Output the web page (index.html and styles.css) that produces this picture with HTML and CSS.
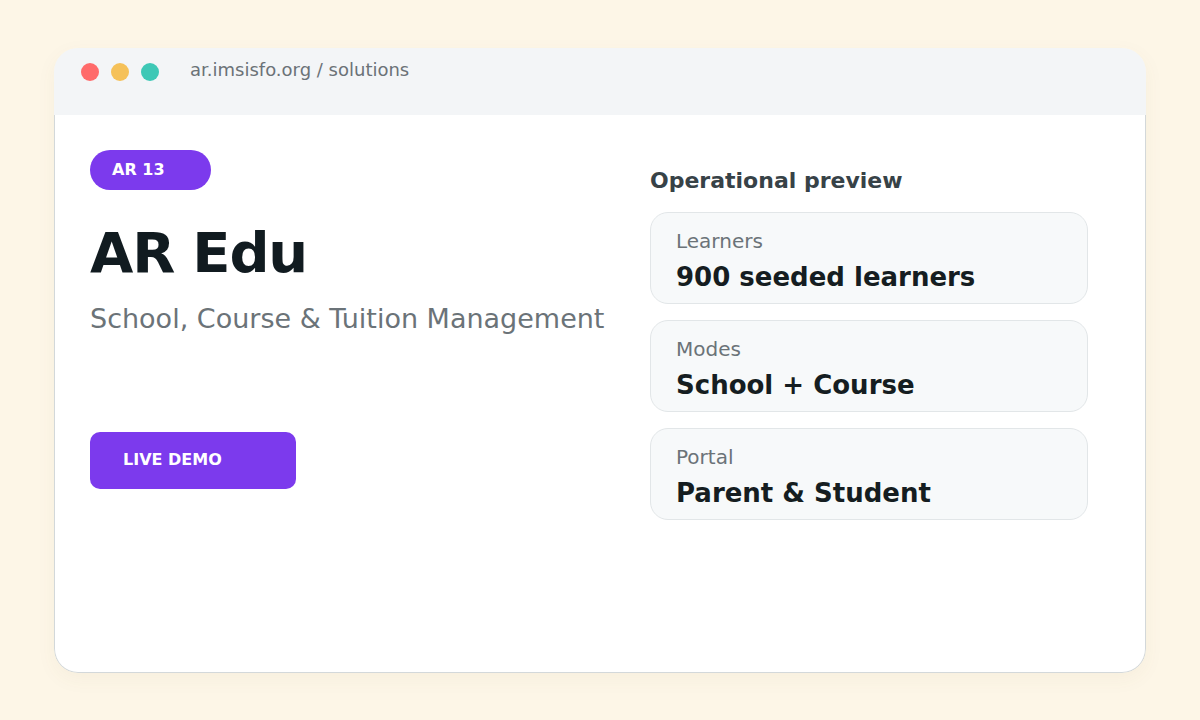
FILE: index.html
```html
<!DOCTYPE html>
<html lang="en">
<head>
<meta charset="utf-8">
<title>AR Edu</title>
<link rel="stylesheet" href="styles.css">
</head>
<body>
<div class="window">
  <div class="titlebar">
    <div class="dots">
      <span class="dot red"></span>
      <span class="dot yellow"></span>
      <span class="dot teal"></span>
    </div>
    <div class="url">ar.imsisfo.org / solutions</div>
  </div>
  <div class="content">
    <div class="left">
      <div class="badge">AR 13</div>
      <h1 class="title">AR Edu</h1>
      <p class="subtitle">School, Course &amp; Tuition Management</p>
      <a class="cta">LIVE DEMO</a>
    </div>
    <div class="right">
      <h2 class="heading">Operational preview</h2>
      <div class="cards">
        <div class="card">
          <div class="label">Learners</div>
          <div class="value">900 seeded learners</div>
        </div>
        <div class="card">
          <div class="label">Modes</div>
          <div class="value">School + Course</div>
        </div>
        <div class="card">
          <div class="label">Portal</div>
          <div class="value">Parent &amp; Student</div>
        </div>
      </div>
    </div>
  </div>
</div>
</body>
</html>
```

FILE: styles.css
```css
* { box-sizing: border-box; }
html, body { margin: 0; padding: 0; }
body {
  background: #fdf6e7;
  font-family: "DejaVu Sans", Verdana, sans-serif;
  width: 1200px;
  height: 720px;
  padding: 48px 54px;
}
.window {
  width: 1092px;
  height: 625px;
  border-radius: 24px;
  overflow: hidden;
  display: flex;
  flex-direction: column;
  box-shadow: 0 6px 20px rgba(120, 100, 60, 0.05);
}
.titlebar {
  height: 67px;
  background: #f3f5f7;
  display: flex;
  align-items: flex-start;
  padding: 11px 27px 0;
}
.dots {
  display: flex;
  gap: 12px;
  margin-top: 4px;
}
.dot {
  width: 18px;
  height: 18px;
  border-radius: 50%;
  display: block;
}
.red { background: #ff6b6b; }
.yellow { background: #f5c159; }
.teal { background: #3ec8b6; }
.url {
  margin-left: 31px;
  font-size: 18px;
  line-height: 21px;
  color: #6b7277;
}
.content {
  flex: 1;
  background: #ffffff;
  border: 1px solid #d3d8da;
  border-top: none;
  border-radius: 0 0 24px 24px;
  display: flex;
  padding: 35px 57px 36px 35px;
}
.left {
  flex: 1;
  display: flex;
  flex-direction: column;
  align-items: flex-start;
}
.badge {
  width: 121px;
  height: 40px;
  line-height: 40px;
  padding-left: 22px;
  border-radius: 20px;
  background: #7c3aed;
  color: #ffffff;
  font-weight: bold;
  font-size: 16px;
}
.title {
  margin: 32px 0 0;
  font-size: 56px;
  line-height: 61.6px;
  letter-spacing: -1.2px;
  font-weight: bold;
  color: #111b20;
}
.subtitle {
  margin: 16px 0 0;
  font-size: 27px;
  line-height: 38px;
  color: #6b7378;
}
.cta {
  margin-top: 94px;
  width: 206px;
  height: 57px;
  line-height: 56px;
  padding-left: 33px;
  border-radius: 10px;
  background: #7c3aed;
  color: #ffffff;
  font-weight: bold;
  font-size: 16px;
  text-decoration: none;
}
.right {
  width: 438px;
  padding-top: 18px;
}
.heading {
  margin: 0;
  font-size: 22px;
  line-height: 26.4px;
  font-weight: bold;
  color: #374247;
}
.cards {
  margin-top: 18px;
  display: flex;
  flex-direction: column;
  gap: 16px;
}
.card {
  height: 92px;
  background: #f7f9fa;
  border: 1px solid #e2e6e8;
  border-radius: 18px;
  padding: 16px 25px 0;
}
.label {
  font-size: 20px;
  line-height: 24px;
  color: #6b7378;
}
.value {
  margin-top: 9px;
  font-size: 26px;
  line-height: 31px;
  font-weight: bold;
  color: #151d21;
}
```
